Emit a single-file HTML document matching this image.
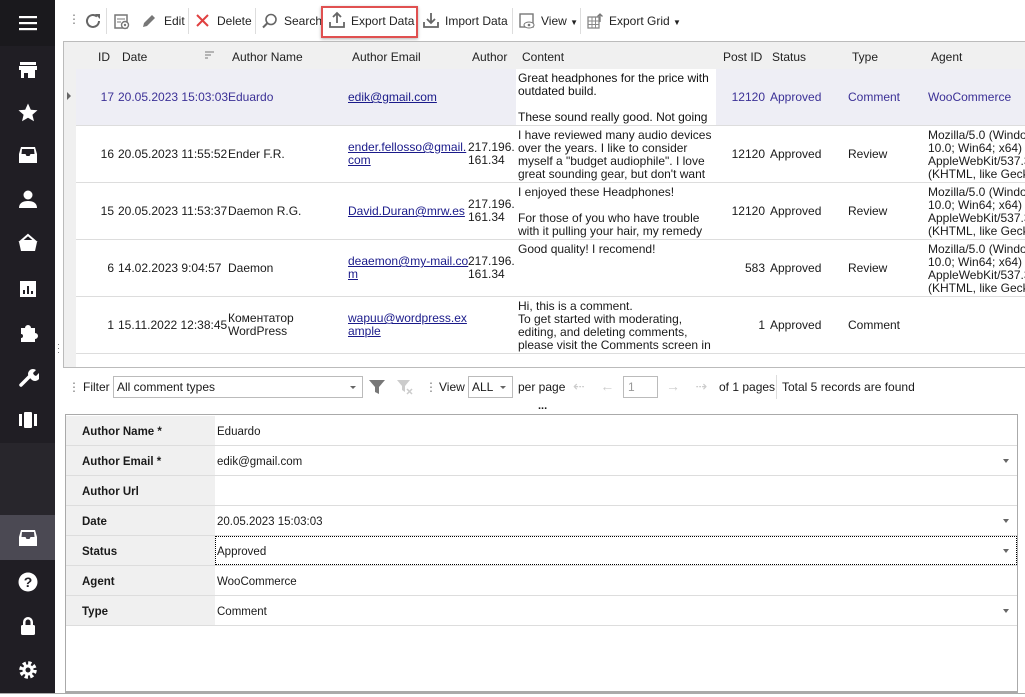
<!DOCTYPE html>
<html><head><meta charset="utf-8"><style>
*{margin:0;padding:0;box-sizing:border-box}
body{width:1025px;height:697px;position:relative;background:#fff;font-family:"Liberation Sans","Noto Sans CJK SC",sans-serif;font-size:12px;color:#1a1a1a;overflow:hidden}
.a{position:absolute;white-space:nowrap}
#sb{position:absolute;left:0;top:0;width:55px;height:693px;background:#201e24}
.ic{position:absolute;left:17px;width:22px;height:22px}
.tb{position:absolute;top:14px;font-size:12px;color:#222}
.sep{position:absolute;top:8px;width:1px;height:26px;background:#ddd}
.hd{position:absolute;top:50px;color:#222}
.row{position:absolute;left:76px;width:949px;height:57px;border-bottom:1px solid #ddd;background:#fff}
.c{position:absolute;white-space:nowrap;line-height:13px}
.lnk{color:#1a1a8a;text-decoration:underline}
.fr{position:absolute;left:66px;width:951px;height:30px;border-bottom:1px solid #ddd}
.fl{position:absolute;left:0;top:0;width:149px;height:29px;background:#f0f0f0;font-weight:bold;padding:10px 0 0 16px;font-size:11.5px}
.fv{position:absolute;left:151px;top:10px;font-size:11.5px}
.dd{position:absolute;right:8px;top:13px;border-left:3.5px solid transparent;border-right:3.5px solid transparent;border-top:4px solid #666}
</style></head><body>
<div id="sb">
 <div style="position:absolute;left:0;top:0;width:55px;height:46px;background:#1a191d"></div>
 <div style="position:absolute;left:0;top:443px;width:55px;height:72px;background:#28262c"></div>
 <div style="position:absolute;left:0;top:515px;width:55px;height:45px;background:#4b4953"></div>
 <svg class="ic" style="top:12px" viewBox="0 0 22 22"><rect x="2" y="4" width="18" height="2.2" fill="#fff"/><rect x="2" y="10" width="18" height="2.2" fill="#fff"/><rect x="2" y="16" width="18" height="2.2" fill="#fff"/></svg>
 <svg class="ic" style="top:59px" viewBox="0 0 22 22" fill="#fff"><rect x="3" y="3" width="16" height="3"/><rect x="2" y="7" width="18" height="4"/><path d="M4 11h14v8H4zM7 14v5h4v-5z" fill-rule="evenodd"/></svg>
 <svg class="ic" style="top:102px" viewBox="0 0 22 22" fill="#fff"><path d="M11 1.5l2.8 6.2 6.7.6-5.1 4.4 1.6 6.6L11 15.8l-6 3.5 1.6-6.6L1.5 8.3l6.7-.6z"/></svg>
 <svg class="ic" style="top:144px" viewBox="0 0 22 22" fill="#fff"><path d="M4 3h14l2 7v9H2v-9zM4.5 10h4l1 2h3l1-2h4L17 5H5z" fill-rule="evenodd"/></svg>
 <svg class="ic" style="top:188px" viewBox="0 0 22 22" fill="#fff"><circle cx="11" cy="7" r="4.5"/><path d="M2 20c0-5 4-7 9-7s9 2 9 7z"/></svg>
 <svg class="ic" style="top:232px" viewBox="0 0 22 22" fill="#fff"><path d="M11 3l7 6H4z" fill="none" stroke="#fff" stroke-width="2"/><path d="M2 10h18l-2 9H4z"/></svg>
 <svg class="ic" style="top:278px" viewBox="0 0 22 22" fill="#fff"><path d="M3 3h16v16H3zM6 12v4h2v-4zM10 8v8h2V8zM14 13v3h2v-3z" fill-rule="evenodd"/></svg>
 <svg class="ic" style="top:322px" viewBox="0 0 22 22" fill="#fff"><path d="M4 6h4a3 3 0 016 0h4v5a3 3 0 010 6v3H4v-4a2 2 0 000-4z"/></svg>
 <svg class="ic" style="top:366px" viewBox="0 0 22 22"><path d="M4 19l8-8" stroke="#fff" stroke-width="3.5" stroke-linecap="round"/><path d="M12 11a5 5 0 017-7l-3 3 1 2 2 1 3-3a5 5 0 01-7 7z" fill="#fff"/></svg>
 <svg class="ic" style="top:409px" viewBox="0 0 22 22" fill="#fff"><rect x="2" y="5" width="3" height="12"/><rect x="7" y="3" width="8" height="16" rx="1"/><rect x="17" y="5" width="3" height="12"/></svg>
 <svg class="ic" style="top:527px" viewBox="0 0 22 22" fill="#fff"><path d="M4 3h14l2 7v9H2v-9zM4.5 10h4l1 2h3l1-2h4L17 5H5z" fill-rule="evenodd"/></svg>
 <svg class="ic" style="top:571px" viewBox="0 0 22 22"><circle cx="11" cy="11" r="9.5" fill="#fff"/><text x="11" y="16" font-size="14" font-weight="bold" text-anchor="middle" fill="#201e24" font-family="Liberation Sans">?</text></svg>
 <svg class="ic" style="top:615px" viewBox="0 0 22 22" fill="#fff"><path d="M6 10V7a5 5 0 0110 0v3h-2.5V7a2.5 2.5 0 00-5 0v3z"/><rect x="4" y="10" width="14" height="10" rx="1.5"/></svg>
 <svg class="ic" style="top:659px" viewBox="0 0 22 22"><circle cx="11" cy="11" r="6.5" fill="none" stroke="#fff" stroke-width="4.5" stroke-dasharray="3 2.1"/><circle cx="11" cy="11" r="5.5" fill="#fff"/><circle cx="11" cy="11" r="2.5" fill="#201e24"/></svg>
</div>
<div style="position:absolute;left:0;top:693px;width:1025px;height:4px;background:#fff;border-top:1px solid #aaa"></div>

<!-- toolbar -->
<div class="a" style="left:68px;top:12px;color:#777">⋮</div>
<svg class="a" style="left:83px;top:11px" width="20" height="20" viewBox="0 0 20 20"><path d="M16 10a6 6 0 11-2-4.5" fill="none" stroke="#666" stroke-width="2"/><path d="M12 3h5v5z" fill="#666"/></svg>
<div class="sep" style="left:106px"></div>
<svg class="a" style="left:112px;top:11px" width="20" height="20" viewBox="0 0 20 20"><rect x="3" y="4" width="12" height="13" fill="none" stroke="#777" stroke-width="1.5"/><circle cx="13" cy="14" r="3.5" fill="#fff" stroke="#777" stroke-width="1.4"/><circle cx="13" cy="14" r="1.2" fill="#777"/><path d="M5 8h8M5 11h4" stroke="#777"/></svg>
<svg class="a" style="left:140px;top:12px" width="18" height="18" viewBox="0 0 18 18"><path d="M3 15l1-4 8-8 3 3-8 8z" fill="#777"/></svg>
<div class="tb" style="left:164px">Edit</div>
<div class="sep" style="left:188px"></div>
<svg class="a" style="left:195px;top:13px" width="15" height="15" viewBox="0 0 15 15"><path d="M2 2l11 11M13 2L2 13" stroke="#e04040" stroke-width="2"/></svg>
<div class="tb" style="left:217px">Delete</div>
<div class="sep" style="left:255px"></div>
<svg class="a" style="left:261px;top:12px" width="18" height="18" viewBox="0 0 18 18"><circle cx="10" cy="7.5" r="5" fill="none" stroke="#666" stroke-width="1.6"/><path d="M6.5 11L2 15.5" stroke="#666" stroke-width="2"/></svg>
<div class="tb" style="left:284px">Search</div>
<div class="a" style="left:321px;top:6px;width:97px;height:32px;border:2px solid #e05050;box-shadow:0 1px 3px rgba(0,0,0,.3)"></div>
<svg class="a" style="left:328px;top:11px" width="18" height="18" viewBox="0 0 18 18"><path d="M2 11v5h14v-5" fill="none" stroke="#666" stroke-width="1.8"/><path d="M9 12V3M5 6l4-4 4 4" fill="none" stroke="#666" stroke-width="1.8"/></svg>
<div class="tb" style="left:351px">Export Data</div>
<svg class="a" style="left:422px;top:11px" width="18" height="18" viewBox="0 0 18 18"><path d="M2 11v5h14v-5" fill="none" stroke="#666" stroke-width="1.8"/><path d="M9 2v9M5 8l4 4 4-4" fill="none" stroke="#666" stroke-width="1.8"/></svg>
<div class="tb" style="left:445px">Import Data</div>
<div class="sep" style="left:512px"></div>
<svg class="a" style="left:518px;top:12px" width="18" height="18" viewBox="0 0 18 18"><rect x="2" y="2" width="13" height="13" fill="none" stroke="#777" stroke-width="1.4"/><ellipse cx="11" cy="13" rx="5" ry="3" fill="#fff" stroke="#777"/><circle cx="11" cy="13" r="1.3" fill="#777"/></svg>
<div class="tb" style="left:541px">View <span style="font-size:8px">▼</span></div>
<div class="sep" style="left:580px"></div>
<svg class="a" style="left:586px;top:12px" width="18" height="18" viewBox="0 0 18 18"><rect x="2" y="5" width="11" height="11" fill="none" stroke="#888" stroke-width="1.3"/><path d="M2 9h11M2 12.5h11M6 5v11M9.5 5v11" stroke="#888"/><path d="M14 10V2M11.5 4.5L14 2l2.5 2.5" fill="none" stroke="#777" stroke-width="1.3"/></svg>
<div class="tb" style="left:609px">Export Grid <span style="font-size:8px">▼</span></div>

<!-- grid -->
<div class="a" style="left:63px;top:41px;width:962px;height:327px;border:1px solid #bbb;border-right:none;background:#f0f0f0"></div>
<div class="a" style="left:76px;top:354px;width:949px;height:13px;background:#fff"></div>
<div class="hd" style="left:98px">ID</div><div class="hd" style="left:122px">Date</div>
<svg class="a" style="left:205px;top:51px" width="10" height="8" viewBox="0 0 10 8"><path d="M0 1h9M0 4h6M0 7h3" stroke="#777"/></svg>
<div class="hd" style="left:232px">Author Name</div><div class="hd" style="left:352px">Author Email</div>
<div class="hd" style="left:472px">Author</div><div class="hd" style="left:522px">Content</div>
<div class="hd" style="left:723px">Post ID</div><div class="hd" style="left:772px">Status</div>
<div class="hd" style="left:852px">Type</div><div class="hd" style="left:931px">Agent</div>

<div class="row" style="top:69px;background:#eeeef5;color:#3b3096">
 <div class="c" style="right:911px;top:22px">17</div><div class="c" style="left:42px;top:22px">20.05.2023 15:03:03</div>
 <div class="c" style="left:152px;top:22px">Eduardo</div><div class="c lnk" style="left:272px;top:22px">edik@gmail.com</div>
 <div class="a" style="left:440px;top:0;width:200px;height:56px;background:#fff"></div>
 <div class="c" style="left:442px;top:3px;color:#111">Great headphones for the price with<br>outdated build.<br><br>These sound really good. Not going</div>
 <div class="c" style="right:260px;top:22px">12120</div><div class="c" style="left:694px;top:22px">Approved</div>
 <div class="c" style="left:772px;top:22px">Comment</div><div class="c" style="left:852px;top:22px">WooCommerce</div>
</div>
<div class="a" style="left:67px;top:92px;border-top:4px solid transparent;border-bottom:4px solid transparent;border-left:4px solid #666"></div>
<div class="row" style="top:126px">
 <div class="c" style="right:911px;top:22px">16</div><div class="c" style="left:42px;top:22px">20.05.2023 11:55:52</div>
 <div class="c" style="left:152px;top:22px">Ender F.R.</div><div class="c lnk" style="left:272px;top:15px">ender.fellosso@gmail.<br>com</div>
 <div class="c" style="left:392px;top:15px">217.196.<br>161.34</div>
 <div class="c" style="left:442px;top:3px">I have reviewed many audio devices<br>over the years. I like to consider<br>myself a "budget audiophile". I love<br>great sounding gear, but don't want</div>
 <div class="c" style="right:260px;top:22px">12120</div><div class="c" style="left:694px;top:22px">Approved</div>
 <div class="c" style="left:772px;top:22px">Review</div><div class="c" style="left:852px;top:3px">Mozilla/5.0 (Windo<br>10.0; Win64; x64)<br>AppleWebKit/537.3<br>(KHTML, like Gecko</div>
</div>
<div class="row" style="top:183px">
 <div class="c" style="right:911px;top:22px">15</div><div class="c" style="left:42px;top:22px">20.05.2023 11:53:37</div>
 <div class="c" style="left:152px;top:22px">Daemon R.G.</div><div class="c lnk" style="left:272px;top:22px">David.Duran@mrw.es</div>
 <div class="c" style="left:392px;top:15px">217.196.<br>161.34</div>
 <div class="c" style="left:442px;top:3px">I enjoyed these Headphones!<br><br>For those of you who have trouble<br>with it pulling your hair, my remedy</div>
 <div class="c" style="right:260px;top:22px">12120</div><div class="c" style="left:694px;top:22px">Approved</div>
 <div class="c" style="left:772px;top:22px">Review</div><div class="c" style="left:852px;top:3px">Mozilla/5.0 (Windo<br>10.0; Win64; x64)<br>AppleWebKit/537.3<br>(KHTML, like Gecko</div>
</div>
<div class="row" style="top:240px">
 <div class="c" style="right:911px;top:22px">6</div><div class="c" style="left:42px;top:22px">14.02.2023 9:04:57</div>
 <div class="c" style="left:152px;top:22px">Daemon</div><div class="c lnk" style="left:272px;top:15px">deaemon@my-mail.co<br>m</div>
 <div class="c" style="left:392px;top:15px">217.196.<br>161.34</div>
 <div class="c" style="left:442px;top:3px">Good quality! I recomend!</div>
 <div class="c" style="right:260px;top:22px">583</div><div class="c" style="left:694px;top:22px">Approved</div>
 <div class="c" style="left:772px;top:22px">Review</div><div class="c" style="left:852px;top:3px">Mozilla/5.0 (Windo<br>10.0; Win64; x64)<br>AppleWebKit/537.3<br>(KHTML, like Gecko</div>
</div>
<div class="row" style="top:297px">
 <div class="c" style="right:911px;top:22px">1</div><div class="c" style="left:42px;top:22px">15.11.2022 12:38:45</div>
 <div class="c" style="left:152px;top:15px">Коментатор<br>WordPress</div><div class="c lnk" style="left:272px;top:15px">wapuu@wordpress.ex<br>ample</div>
 <div class="c" style="left:442px;top:3px">Hi, this is a comment.<br>To get started with moderating,<br>editing, and deleting comments,<br>please visit the Comments screen in</div>
 <div class="c" style="right:260px;top:22px">1</div><div class="c" style="left:694px;top:22px">Approved</div>
 <div class="c" style="left:772px;top:22px">Comment</div>
</div>
<div class="a" style="left:57px;top:342px;color:#666;font-size:9px;line-height:4px">·<br>·<br>·</div>

<!-- filter bar -->
<div class="a" style="left:68px;top:380px;color:#777">⋮</div>
<div class="a" style="left:83px;top:380px">Filter</div>
<div class="a" style="left:113px;top:376px;width:250px;height:22px;border:1px solid #bbb;padding:3px 3px">All comment types<span style="position:absolute;right:6px;top:9px;border-left:3px solid transparent;border-right:3px solid transparent;border-top:3px solid #666"></span></div>
<svg class="a" style="left:368px;top:378px" width="18" height="18" viewBox="0 0 18 18"><path d="M1 2h16l-6 7v7l-4-2V9z" fill="#777"/></svg>
<svg class="a" style="left:396px;top:378px" width="18" height="18" viewBox="0 0 18 18"><path d="M1 2h13l-5 6v6l-3-2V8z" fill="#ccc"/><path d="M11 11l5 5M16 11l-5 5" stroke="#ccc" stroke-width="1.5"/></svg>
<div class="a" style="left:425px;top:380px;color:#777">⋮</div>
<div class="a" style="left:439px;top:380px">View</div>
<div class="a" style="left:468px;top:376px;width:45px;height:22px;border:1px solid #bbb;padding:3px 3px">ALL<span style="position:absolute;right:6px;top:9px;border-left:3px solid transparent;border-right:3px solid transparent;border-top:3px solid #666"></span></div>
<div class="a" style="left:518px;top:380px">per page</div>
<div class="a" style="left:573px;top:378px;color:#ccc;font-size:14px">⇠&nbsp;&nbsp;&nbsp;&nbsp;←</div>
<div class="a" style="left:623px;top:376px;width:35px;height:22px;border:1px solid #bbb;padding:3px 4px;color:#999">1</div>
<div class="a" style="left:666px;top:378px;color:#ccc;font-size:14px">→&nbsp;&nbsp;&nbsp;&nbsp;⇢</div>
<div class="a" style="left:719px;top:380px">of 1 pages</div>
<div class="a" style="left:776px;top:375px;width:1px;height:24px;background:#ddd"></div>
<div class="a" style="left:782px;top:380px">Total 5 records are found</div>
<div class="a" style="left:538px;top:400px;font-size:11px;font-weight:bold">...</div>

<!-- form -->
<div class="a" style="left:65px;top:414px;width:953px;height:279px;border:1px solid #aaa;border-bottom:2px solid #aaa"></div>
<div class="fr" style="top:416px"><div class="fl">Author Name *</div><div class="fv">Eduardo</div></div>
<div class="fr" style="top:446px"><div class="fl">Author Email *</div><div class="fv">edik@gmail.com</div><div class="dd"></div></div>
<div class="fr" style="top:476px"><div class="fl">Author Url</div></div>
<div class="fr" style="top:506px"><div class="fl">Date</div><div class="fv">20.05.2023 15:03:03</div><div class="dd"></div></div>
<div class="fr" style="top:536px"><div class="fl">Status</div><div class="a" style="left:149px;top:0;width:802px;height:29px;border:1px dotted #000"></div><div class="fv">Approved</div><div class="dd"></div></div>
<div class="fr" style="top:566px"><div class="fl">Agent</div><div class="fv">WooCommerce</div></div>
<div class="fr" style="top:596px"><div class="fl">Type</div><div class="fv">Comment</div><div class="dd"></div></div>
</body></html>
